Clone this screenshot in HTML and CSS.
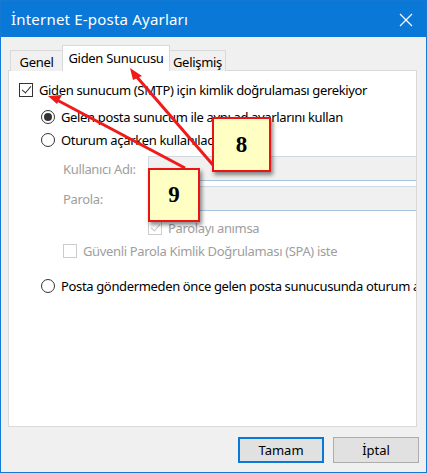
FILE: index.html
```html
<!DOCTYPE html>
<html lang="tr">
<head>
  <meta charset="UTF-8">
  <title>İnternet E-posta Ayarları</title>
  <link rel="stylesheet" href="styles.css">
</head>
<body>
  <div class="window">
    <div class="titlebar">
      <span class="title">İnternet E-posta Ayarları</span>
      <svg class="close" width="14" height="14" viewBox="0 0 14 14">
        <path d="M1 1 L13 13 M13 1 L1 13" stroke="#fff" stroke-width="1.2" fill="none"/>
      </svg>
    </div>

    <div class="tabs">
      <div class="tab tab-genel">Genel</div>
      <div class="tab tab-active">Giden Sunucusu</div>
      <div class="tab tab-gelismis">Gelişmiş</div>
    </div>

    <div class="panel">
      <div class="row row-auth">
        <span class="check checked"></span>
        <span class="label">Giden sunucum (SMTP) için kimlik doğrulaması gerekiyor</span>
      </div>
      <div class="row row-r1 indent1">
        <span class="radio selected"></span>
        <span class="label">Gelen posta sunucum ile aynı ad ayarlarını kullan</span>
      </div>
      <div class="row row-r2 indent1">
        <span class="radio"></span>
        <span class="label">Oturum açarken kullanılacak</span>
      </div>
      <div class="field-row row-user indent2">
        <span class="field-label">Kullanıcı Adı:</span>
        <span class="field"></span>
      </div>
      <div class="field-row row-pass indent2">
        <span class="field-label">Parola:</span>
        <span class="field"></span>
      </div>
      <div class="row row-remember indent3">
        <span class="check checked disabled"></span>
        <span class="label muted">Parolayı anımsa</span>
      </div>
      <div class="row row-spa indent2">
        <span class="check disabled"></span>
        <span class="label muted">Güvenli Parola Kimlik Doğrulaması (SPA) iste</span>
      </div>
      <div class="row row-r3 indent1">
        <span class="radio"></span>
        <span class="label">Posta göndermeden önce gelen posta sunucusunda oturum aç</span>
      </div>
    </div>

    <div class="footer">
      <button class="btn btn-default">Tamam</button>
      <button class="btn">İptal</button>
    </div>

    <!-- ekran görüntüsü üzerindeki işaretler -->
    <svg class="arrows" width="427" height="473" viewBox="0 0 427 473">
      <g stroke="#f01a1a" stroke-width="3" fill="#f01a1a">
        <line x1="213" y1="165" x2="136" y2="76"/>
        <polygon points="130,68 142,76 133,80" stroke="none"/>
        <line x1="185" y1="168" x2="57" y2="100"/>
        <polygon points="48,96 62,95 57,104" stroke="none"/>
      </g>
    </svg>
    <div class="callout callout-8">8</div>
    <div class="callout callout-9">9</div>
  </div>
</body>
</html>
```

FILE: styles.css
```css
body {
  margin: 0;
  font-family: 'Noto Sans', 'Open Sans', sans-serif;
  color: #000;
}
.window {
  position: relative;
  width: 427px;
  height: 473px;
  box-sizing: border-box;
  border: 1px solid #1479d4;
  background: #f0f0f0;
  display: flex;
  flex-direction: column;
  overflow: hidden;
}
.titlebar {
  height: 36px;
  flex: none;
  background: #0a78d7;
  color: #fff;
  display: flex;
  align-items: center;
  justify-content: space-between;
  padding: 0 13px 0 10px;
}
.title {
  font-size: 15px;
  letter-spacing: 0.2px;
  padding-bottom: 1px;
}
.close {
  margin-top: 1px;
}
.tabs {
  display: flex;
  align-items: flex-end;
  height: 26px;
  margin-top: 8px;
  padding-left: 9px;
  position: relative;
  z-index: 2;
  letter-spacing: -0.3px;
}
.tab {
  box-sizing: border-box;
  height: 21px;
  border: 1px solid #d9d9d9;
  border-bottom: none;
  background: #f0f0f0;
  font-size: 13px;
  line-height: 19px;
  padding-top: 2px;
  text-align: center;
}
.tab-genel {
  width: 53px;
}
.tab-active {
  width: 108px;
  height: 26px;
  margin-left: -1px;
  background: #fff;
  padding-top: 2px;
  line-height: 20px;
}
.tab-gelismis {
  width: 57px;
  margin-left: -1px;
}
.panel {
  box-sizing: border-box;
  height: 357px;
  margin: -1px 9px 0 7px;
  background: #fff;
  border: 1px solid #d9d9d9;
  padding: 9px 0 0 10px;
  overflow: hidden;
  white-space: nowrap;
  font-size: 13px;
  letter-spacing: -0.35px;
}
.row {
  display: flex;
  align-items: center;
  height: 20px;
}
.label {
  margin-left: 6px;
}
.muted, .field-label {
  color: #9e9e9e;
}
.indent1 { padding-left: 22px; }
.indent2 { padding-left: 44px; }
.indent3 { padding-left: 129px; }
.row-r1 { margin-top: 7px; }
.row-r2 { margin-top: 3px; }
.row-user { margin-top: 6px; }
.row-pass { margin-top: 5px; }
.row-remember { margin-top: 7px; }
.row-spa { margin-top: 3px; }
.row-r3 { margin-top: 15px; }
.field-row {
  display: flex;
  align-items: center;
  height: 25px;
}
.field-label {
  width: 85px;
  flex: none;
}
.field {
  flex: none;
  box-sizing: border-box;
  width: 300px;
  height: 25px;
  background: #f0f0f0;
  border: 1px solid #cfd8e3;
  border-bottom-color: #a8c3e0;
}
.check {
  flex: none;
  box-sizing: border-box;
  width: 14px;
  height: 14px;
  border: 1px solid #333;
  background: #fff;
  position: relative;
}
.check.disabled {
  border-color: #cccccc;
}
.check.checked::after {
  content: "";
  position: absolute;
  left: 4px;
  top: 0px;
  width: 4px;
  height: 8px;
  border: solid #333;
  border-width: 0 1.5px 1.5px 0;
  transform: rotate(40deg);
}
.check.disabled.checked::after {
  border-color: #c6c6c6;
}
.radio {
  flex: none;
  box-sizing: border-box;
  width: 14px;
  height: 14px;
  border: 1px solid #333;
  border-radius: 50%;
  background: #fff;
  display: flex;
  align-items: center;
  justify-content: center;
}
.radio.selected::after {
  content: "";
  width: 8px;
  height: 8px;
  border-radius: 50%;
  background: #333;
}
.footer {
  display: flex;
  justify-content: flex-end;
  gap: 9px;
  padding: 10px 7px 0 0;
}
.btn {
  box-sizing: border-box;
  width: 86px;
  height: 26px;
  background: #e1e1e1;
  border: 1px solid #adadad;
  font-family: inherit;
  font-size: 13px;
  color: #000;
  padding: 0;
}
.btn-default {
  border: 2px solid #0a78d7;
}
.arrows {
  position: absolute;
  left: -1px;
  top: -1px;
  z-index: 3;
}
.callout {
  position: absolute;
  z-index: 4;
  box-sizing: border-box;
  background: #ffffc4;
  border: 2px solid #e81416;
  box-shadow: 2px 3px 4px rgba(0, 0, 0, 0.45);
  font-family: 'Liberation Serif', serif;
  font-weight: bold;
  font-size: 23px;
  display: flex;
  align-items: center;
  justify-content: center;
}
.callout-8 {
  left: 211px;
  top: 116px;
  width: 59px;
  height: 55px;
}
.callout-9 {
  left: 147px;
  top: 167px;
  width: 52px;
  height: 54px;
}
```
